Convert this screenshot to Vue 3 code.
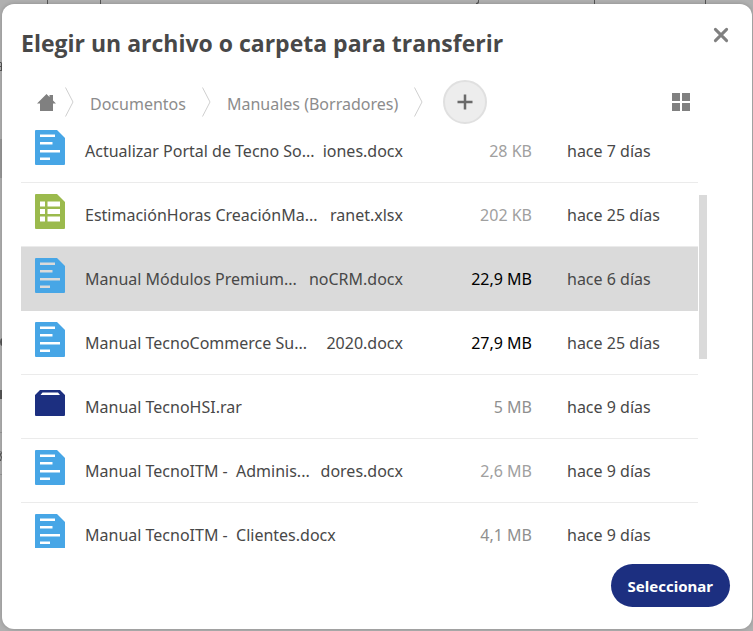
<template>
  <div class="backdrop">
    <!-- page left behind the dialog -->
    <svg class="behind" width="753" height="631" viewBox="0 0 753 631" aria-hidden="true">
      <g fill="#555">
        <rect x="47" y="0" width="1" height="4" />
        <rect x="100" y="0" width="1" height="4" />
        <rect x="594" y="0" width="1" height="4" />
        <rect x="705" y="0" width="1" height="4" />
        <path d="M479 0v2q0 2-3 2v-1q2 0 2-2V0z" />
        <path d="M0 62h1l1 1v8H0v-1h1v-3H0v-1h1v-3H0z" />
        <path d="M2 338q-2 1-2 4t2 4z" />
        <rect x="0" y="390" width="2" height="9" />
        <path d="M0 451h1l1 2-1 2 1 2-1 4H0v-1l1-2-1-3v-1l1-2z" />
      </g>
      <g fill="#999">
        <rect x="0" y="139" width="2" height="39" />
        <rect x="0" y="432" width="2" height="1" />
        <rect x="0" y="474" width="2" height="1" />
      </g>
    </svg>

    <div class="dialog" role="dialog" aria-labelledby="dialog-title">
      <header class="dialog-header">
        <h1 id="dialog-title" class="title">Elegir un archivo o carpeta para transferir</h1>
        <button class="icon-button close" type="button" aria-label="Cerrar">
          <svg width="16" height="16" viewBox="0 0 16 16">
            <path d="M2.4 2.4l11.2 11.2M13.6 2.4L2.4 13.6" fill="none" stroke="#808080" stroke-width="3" stroke-linecap="round" />
          </svg>
        </button>
      </header>

      <div class="toolbar">
        <nav class="crumbs" aria-label="Ruta">
          <a class="crumb home" href="#" aria-label="Inicio">
            <svg width="19" height="17" viewBox="0 0 19 17">
              <path d="M9.500 0L0 9.500h3V17h13V9.500h3L16 6.500V1h-3.500v2z" fill="#808080" />
            </svg>
          </a>
          <template v-for="crumb in crumbs" :key="crumb">
            <svg class="chevron" width="9" height="30" viewBox="0 0 9 30">
              <path d="M.5.5L8 15 .5 29.5" fill="none" stroke="#cfcfcf" />
            </svg>
            <a class="crumb" href="#">{{ crumb }}</a>
          </template>
          <svg class="chevron" width="9" height="30" viewBox="0 0 9 30">
            <path d="M.5.5L8 15 .5 29.5" fill="none" stroke="#cfcfcf" />
          </svg>
        </nav>
        <button class="add" type="button" aria-label="Nueva carpeta">
          <svg width="16" height="16" viewBox="0 0 16 16">
            <path d="M8 .5v15M.5 8h15" fill="none" stroke="#6a6a6a" stroke-width="2.5" />
          </svg>
        </button>
        <button class="icon-button view" type="button" aria-label="Vista de cuadrícula">
          <svg width="18" height="18" viewBox="0 0 18 18" fill="#808080">
            <path d="M0 0h8v8H0zM10 0h8v8h-8zM0 10h8v8H0zM10 10h8v8h-8z" />
          </svg>
        </button>
      </div>

      <div class="list">
        <div class="viewport">
          <table class="files">
            <tbody>
              <tr v-for="file in files" :key="file.start" :class="{ selected: file.selected }">
                <td class="col-icon">
                  <svg v-if="file.type === 'doc'" class="icon" width="30" height="35" viewBox="0 0 30 35">
                    <path fill="#47a6e6" fill-rule="evenodd" d="M1 0H22L30 8V34q0 1-1 1H1q-1 0-1-1V1q0-1 1-1zM5 4.500v2.500h15V4.500zM5 12v2.500h12.500V12zM5 20v2.500h20V20zM5 27.500V30h10v-2.500z" />
                  </svg>
                  <svg v-else-if="file.type === 'sheet'" class="icon" width="30" height="35" viewBox="0 0 30 35">
                    <path fill="#9bba4d" fill-rule="evenodd" d="M1 0H22L30 8V34q0 1-1 1H1q-1 0-1-1V1q0-1 1-1zM5 7.500v5h5v-5zM12.500 7.500v5H25v-5zM5 15v5h5v-5zM12.500 15v5H25v-5zM5 22.500v5h5v-5zM12.500 22.500v5H25v-5z" />
                  </svg>
                  <svg v-else class="icon package" width="30" height="26" viewBox="0 0 30 26">
                    <path fill="#1c2f80" fill-rule="evenodd" d="M5 0H25L30 5V25q0 1-1 1H1q-1 0-1-1V5zM7.500 2.500L5.500 5H25L23 2.500z" />
                  </svg>
                </td>
                <td class="col-name">
                  <div class="name">
                    <span>{{ file.start }}</span>
                    <span v-if="file.end">{{ file.end }}</span>
                  </div>
                </td>
                <td class="col-size" :class="file.tone">{{ file.size }}</td>
                <td class="col-date">{{ file.date }}</td>
              </tr>
            </tbody>
          </table>
        </div>
        <div class="track">
          <div class="thumb"></div>
        </div>
      </div>

      <footer class="dialog-footer">
        <button class="select-button" type="button">Seleccionar</button>
      </footer>
    </div>
  </div>
</template>

<script setup>
const crumbs = ['Documentos', 'Manuales (Borradores)']

// tone: the bigger the file, the darker its size
const files = [
  { type: 'doc', start: 'Actualizar Portal de Tecno So...', end: 'iones.docx', size: '28 KB', tone: 'small', date: 'hace 7 días' },
  { type: 'sheet', start: 'EstimaciónHoras CreaciónMa...', end: 'ranet.xlsx', size: '202 KB', tone: 'small', date: 'hace 25 días' },
  { type: 'doc', start: 'Manual Módulos Premium...', end: 'noCRM.docx', size: '22,9 MB', tone: 'big', date: 'hace 6 días', selected: true },
  { type: 'doc', start: 'Manual TecnoCommerce Su...', end: '2020.docx', size: '27,9 MB', tone: 'big', date: 'hace 25 días' },
  { type: 'package', start: 'Manual TecnoHSI.rar', size: '5 MB', tone: 'medium', date: 'hace 9 días' },
  { type: 'doc', start: 'Manual TecnoITM -  Adminis...', end: 'dores.docx', size: '2,6 MB', tone: 'small', date: 'hace 9 días' },
  { type: 'doc', start: 'Manual TecnoITM -  Clientes.docx', size: '4,1 MB', tone: 'medium', date: 'hace 9 días' }
]
</script>

<style>
body {
  background: #b0b0b0;
}
</style>

<style scoped>
.backdrop {
  position: relative;
  display: flex;
  box-sizing: border-box;
  height: 100vh;
  padding: 4px 1px 2px 2px;
  background: #b0b0b0;
  font-family: "Noto Sans", "Open Sans", sans-serif;
  font-size: 16px;
  line-height: 24px;
  color: #484848;
}

.behind {
  position: absolute;
  top: 0;
  left: 0;
}

.dialog {
  position: relative;
  flex: 1;
  min-width: 0;
  display: flex;
  flex-direction: column;
  background: #fff;
  border-radius: 12px;
  box-shadow: 0 0 4px rgba(0, 0, 0, 0.2);
}

button {
  border: none;
  padding: 0;
  font-family: inherit;
  cursor: pointer;
}

.icon-button {
  display: flex;
  background: none;
}

.dialog-header {
  display: flex;
  justify-content: space-between;
  align-items: flex-start;
  padding: 20px 23px 18px 19px;
}

.title {
  margin: 0;
  font-family: "Open Sans", "Noto Sans", sans-serif;
  font-size: 23px;
  line-height: 38px;
  font-weight: 700;
  white-space: nowrap;
}

.close {
  margin-top: 3px;
}

.toolbar {
  display: flex;
  align-items: center;
  height: 44px;
  padding: 0 62px 0 35px;
}

.crumbs {
  display: flex;
  align-items: center;
  gap: 16px;
}

.crumb {
  padding-top: 4px;
  color: #8c8c8c;
  text-decoration: none;
  white-space: nowrap;
}

.home {
  display: flex;
  margin-right: -7px;
  padding: 0;
}

.add {
  display: flex;
  align-items: center;
  justify-content: center;
  width: 44px;
  height: 44px;
  margin-left: 20px;
  border: 2px solid #e0e0e0;
  border-radius: 50%;
  background: #ededed;
}

.view {
  margin-left: auto;
}

.list {
  flex: 1;
  min-height: 0;
  display: flex;
  padding: 0 45px 0 19px;
}

.viewport {
  flex: 1;
  min-width: 0;
  overflow: hidden;
}

/* scrolled down a little */
.files {
  width: 100%;
  margin-top: -5px;
  table-layout: fixed;
  border-collapse: separate;
  border-spacing: 0;
}

td {
  box-sizing: border-box;
  height: 64px;
  padding: 0;
  border-bottom: 1px solid #ebebeb;
  white-space: nowrap;
}

.selected td {
  background: #dadada;
  border-color: #dadada;
}

.col-icon {
  width: 64px;
  padding: 11px 0 0 14px;
  vertical-align: top;
}

.icon {
  display: block;
}

.package {
  margin-top: 4px;
}

.name {
  display: flex;
  justify-content: space-between;
  white-space: pre;
}

.col-size {
  width: 129px;
  text-align: right;
}

.col-date {
  width: 166px;
  padding-left: 35px;
}

.small {
  color: #a0a0a0;
}

.medium {
  color: #8f8f8f;
}

.big {
  color: #000;
}

.track {
  width: 8px;
  margin-left: 1px;
}

.thumb {
  height: 164px;
  margin-top: 71px;
  background: #dadada;
}

.dialog-footer {
  display: flex;
  justify-content: flex-end;
  padding: 16px 22px 22px;
}

.select-button {
  height: 43px;
  padding: 0 17px;
  border-radius: 22px;
  background: #1c2f80;
  color: #fff;
  font-size: 15px;
  font-weight: 700;
}
</style>
